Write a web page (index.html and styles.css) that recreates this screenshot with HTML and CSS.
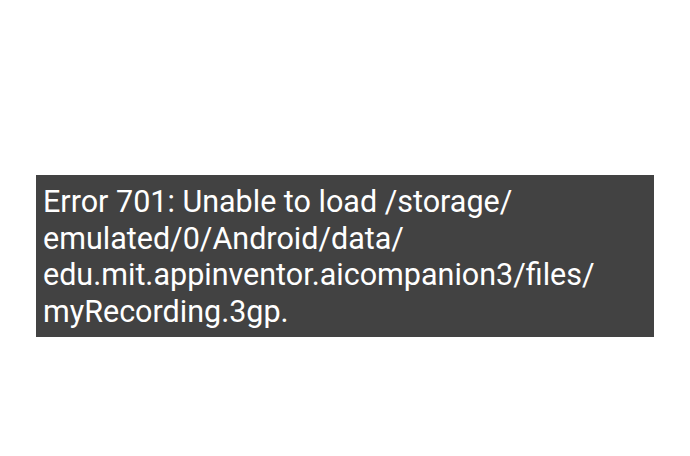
FILE: index.html
```html
<!DOCTYPE html>
<html lang="en">
<head>
    <meta charset="UTF-8">
    <meta name="viewport" content="width=device-width, initial-scale=1.0">
    <title>Error 701</title>
    <link rel="stylesheet" href="styles.css">
</head>
<body>
    <div class="screen">
        <div class="toast">
            Error 701: Unable to load /storage/<br>
            emulated/0/Android/data/<br>
            edu.mit.appinventor.aicompanion3/files/<br>
            myRecording.3gp.
        </div>
    </div>
</body>
</html>
```

FILE: styles.css
```css
body {
    margin: 0;
    background: #ffffff;
    font-family: Roboto, 'Noto Sans', sans-serif;
}
.screen {
    padding: 175px 36px 0 36px;
}
.toast {
    background: #424242;
    color: #ffffff;
    font-size: 30.5px;
    line-height: 36.7px;
    padding: 9px 7px 6px 7px;
    width: 604px;
}
```
